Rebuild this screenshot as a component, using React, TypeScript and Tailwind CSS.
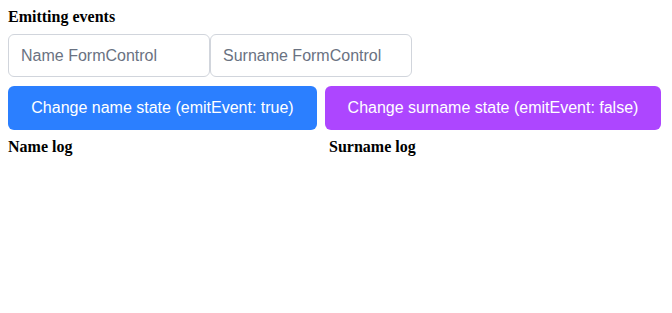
import React from "react";

export default function App() {
  return (
    <div className="min-h-screen bg-white p-2 font-['Liberation_Sans',Arial,sans-serif]">
      <h1 className="font-['Liberation_Serif','Times_New_Roman',serif] text-base font-bold leading-[18px] text-black">
        Emitting events
      </h1>

      <div className="mt-2 flex">
        <input
          placeholder="Name FormControl"
          className="h-[43px] w-[202px] rounded-md border border-gray-300 px-3 text-base text-gray-900 placeholder:text-gray-500 outline-none"
        />
        <input
          placeholder="Surname FormControl"
          className="h-[43px] w-[202px] rounded-md border border-gray-300 px-3 text-base text-gray-900 placeholder:text-gray-500 outline-none"
        />
      </div>

      <div className="mt-[9px] flex gap-2">
        <button className="w-[309px] rounded-md bg-blue-500 py-2.5 text-base leading-6 text-white">
          Change name state (emitEvent: true)
        </button>
        <button className="w-[336px] rounded-md bg-purple-500 py-2.5 text-base leading-6 text-white">
          Change surname state (emitEvent: false)
        </button>
      </div>

      {/* Logs */}
      <div className="mt-2 flex font-['Liberation_Serif','Times_New_Roman',serif] text-base font-bold leading-[18px] text-black">
        <div className="w-[321px]">Name log</div>
        <div className="flex-1">Surname log</div>
      </div>
    </div>
  );
}
